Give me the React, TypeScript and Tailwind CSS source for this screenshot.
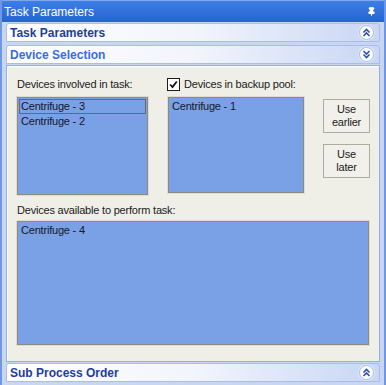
import { Pin } from "lucide-react";

const font = { fontFamily: '"Liberation Sans", Arial, sans-serif' };

const Chevron = ({ up }: { up: boolean }) => (
  <span className="flex size-[15px] items-center justify-center rounded-full border border-[#a6b9e6] bg-white shadow-[0_0_0_1px_#dfe7f8]">
    <svg width="9" height="9" viewBox="0 0 9 9" className={up ? "" : "rotate-180"}>
      <path d="M1.5 4.5 L4.5 1.5 L7.5 4.5 M1.5 8 L4.5 5 L7.5 8" fill="none" stroke="#2d4fb0" strokeWidth="1.6" />
    </svg>
  </span>
);

const Header = ({ title, up, light }: { title: string; up: boolean; light?: boolean }) => (
  <div className="mx-[4px] flex h-[19px] items-center justify-between rounded-t-[3px] border border-[#aabde9] bg-linear-to-r from-white via-[#f2f5fc] to-[#c8d6f4] pr-[5px] pl-[3px]">
    <span className={`text-[12px] font-bold ${light ? "text-[#3a6be4]" : "text-[#1f3d9c]"}`}>{title}</span>
    <Chevron up={up} />
  </div>
);

const ListBox = ({ items, selected, className }: { items: string[]; selected?: number; className: string }) => (
  <div className={`border border-[#dedcd0] ${className}`}>
    <div className="h-full border border-[#8d8b7e] bg-[#7aa0e6] p-[1px] text-[11px] leading-[13px] tracking-[-0.2px] text-[#15182a]">
      {items.map((it, i) => (
        <div key={it} className={`px-[1px] ${i === selected ? "border border-[#6a6a62]" : "border border-transparent"}`}>
          {it}
        </div>
      ))}
    </div>
  </div>
);

const SideButton = ({ lines }: { lines: string[] }) => (
  <button className="flex h-[34px] w-[47px] flex-col items-center justify-center border border-[#aeac9f] bg-[#f1f0ea] text-[11px] leading-[13px] tracking-[-0.2px] text-[#1b1b1b]">
    {lines.map((l) => (
      <span key={l}>{l}</span>
    ))}
  </button>
);

export default function App() {
  return (
    <div style={font} className="flex h-[385px] w-[386px] flex-col overflow-hidden border-x-[2px] border-[#6f98e4] bg-[#c9d6f2]">
      <div className="flex h-[22px] shrink-0 items-center justify-between border-t border-[#7fa8f0] bg-linear-to-b from-[#3d7fe6] to-[#2762d2] pr-[8px] pl-[2px]">
        <span className="text-[12px] text-white">Task Parameters</span>
        <Pin className="size-[9px] text-white" strokeWidth={3} fill="white" />
      </div>

      <div className="mt-[1px]">
        <Header title="Task Parameters" up />
      </div>
      <div className="mt-[3px]">
        <Header title="Device Selection" up={false} light />
      </div>

      <div className="mx-[4px] mt-[1px] flex-1 border border-[#8fb0ea] bg-[#efeee7] shadow-[inset_1px_1px_0_#ffffff]">
        <div className="flex gap-[18px] pt-[12px] pl-[9px] text-[11px] leading-[13px] tracking-[-0.2px] text-[#1b1b1b]">
          <div className="flex flex-col">
            <span className="h-[18px] pl-[1px]">Devices involved in task:</span>
            <ListBox items={["Centrifuge - 3", "Centrifuge - 2"]} selected={0} className="h-[100px] w-[133px]" />
          </div>
          <div className="flex flex-col">
            <label className="flex h-[18px] items-start gap-[4px]">
              <span className="flex size-[13px] items-center justify-center border border-[#1c1c1c] bg-white">
                <svg width="9" height="9" viewBox="0 0 9 9">
                  <path d="M1.2 4.5 L3.5 7 L7.8 1.5" fill="none" stroke="#111" strokeWidth="1.8" />
                </svg>
              </span>
              <span>Devices in backup pool:</span>
            </label>
            <ListBox items={["Centrifuge - 1"]} className="h-[98px] w-[138px]" />
          </div>
          <div className="flex flex-col gap-[11px] pt-[21px]">
            <SideButton lines={["Use", "earlier"]} />
            <SideButton lines={["Use", "later"]} />
          </div>
        </div>
        <div className="flex flex-col pt-[8px] pl-[9px] text-[11px] leading-[13px] tracking-[-0.2px] text-[#1b1b1b]">
          <span className="h-[16px] pl-[1px]">Devices available to perform task:</span>
          <ListBox items={["Centrifuge - 4"]} className="h-[126px] w-[354px]" />
        </div>
      </div>

      <div className="mt-[1px] mb-[3px]">
        <Header title="Sub Process Order" up />
      </div>
    </div>
  );
}
